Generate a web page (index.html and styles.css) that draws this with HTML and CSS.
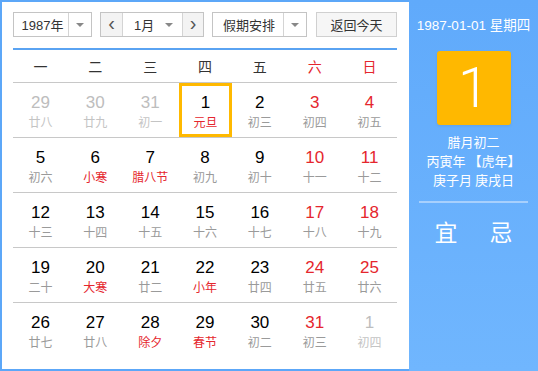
FILE: index.html
```html
<!DOCTYPE html>
<html lang="zh">
<head>
<meta charset="utf-8">
<link rel="stylesheet" href="styles.css">
</head>
<body>
<div class="cal">
  <div class="main">
    <div class="toolbar">
      <div class="sel sel-year"><span class="sel-text">1987年</span><span class="sel-arrow"><i class="tri"></i></span></div>
      <div class="sel sel-month">
        <span class="nav">&lsaquo;</span>
        <span class="sel-text month-text">1月<i class="tri"></i></span>
        <span class="nav nav-r">&rsaquo;</span>
      </div>
      <div class="sel sel-hol"><span class="sel-text">假期安排</span><span class="sel-arrow"><i class="tri"></i></span></div>
      <div class="btn-today">返回今天</div>
    </div>
    <div class="week">
      <span>一</span><span>二</span><span>三</span><span>四</span><span>五</span><span class="red">六</span><span class="red">日</span>
    </div>
    <div class="grid">
      <div class="row">
        <div class="day other"><b>29</b><em>廿八</em></div>
        <div class="day other"><b>30</b><em>廿九</em></div>
        <div class="day other"><b>31</b><em>初一</em></div>
        <div class="day sel-day"><b>1</b><em class="fest">元旦</em></div>
        <div class="day"><b>2</b><em>初三</em></div>
        <div class="day we"><b>3</b><em>初四</em></div>
        <div class="day we"><b>4</b><em>初五</em></div>
      </div>
      <div class="row">
        <div class="day"><b>5</b><em>初六</em></div>
        <div class="day"><b>6</b><em class="fest">小寒</em></div>
        <div class="day"><b>7</b><em class="fest">腊八节</em></div>
        <div class="day"><b>8</b><em>初九</em></div>
        <div class="day"><b>9</b><em>初十</em></div>
        <div class="day we"><b>10</b><em>十一</em></div>
        <div class="day we"><b>11</b><em>十二</em></div>
      </div>
      <div class="row">
        <div class="day"><b>12</b><em>十三</em></div>
        <div class="day"><b>13</b><em>十四</em></div>
        <div class="day"><b>14</b><em>十五</em></div>
        <div class="day"><b>15</b><em>十六</em></div>
        <div class="day"><b>16</b><em>十七</em></div>
        <div class="day we"><b>17</b><em>十八</em></div>
        <div class="day we"><b>18</b><em>十九</em></div>
      </div>
      <div class="row">
        <div class="day"><b>19</b><em>二十</em></div>
        <div class="day"><b>20</b><em class="fest">大寒</em></div>
        <div class="day"><b>21</b><em>廿二</em></div>
        <div class="day"><b>22</b><em class="fest">小年</em></div>
        <div class="day"><b>23</b><em>廿四</em></div>
        <div class="day we"><b>24</b><em>廿五</em></div>
        <div class="day we"><b>25</b><em>廿六</em></div>
      </div>
      <div class="row last">
        <div class="day"><b>26</b><em>廿七</em></div>
        <div class="day"><b>27</b><em>廿八</em></div>
        <div class="day"><b>28</b><em class="fest">除夕</em></div>
        <div class="day"><b>29</b><em class="fest">春节</em></div>
        <div class="day"><b>30</b><em>初二</em></div>
        <div class="day we"><b>31</b><em>初三</em></div>
        <div class="day other"><b>1</b><em>初四</em></div>
      </div>
    </div>
  </div>
  <div class="side">
    <div class="side-date">1987-01-01 星期四</div>
    <div class="big-day">1</div>
    <div class="lunar">
      <div>腊月初二</div>
      <div>丙寅年 【虎年】</div>
      <div>庚子月 庚戌日</div>
    </div>
    <div class="divider"></div>
    <div class="yiji"><span>宜</span><span>忌</span></div>
  </div>
</div>
</body>
</html>
```
FILE: styles.css
```css
html, body {
  margin: 0;
  padding: 0;
  background: #fff;
}
body {
  font-family: "Liberation Sans", "Noto Sans CJK SC", sans-serif;
}
.cal {
  width: 538px;
  height: 371px;
  box-sizing: border-box;
  border: 2px solid #5ca7f8;
  border-right: 0;
  display: flex;
}
.main {
  width: 407px;
  box-sizing: border-box;
  padding: 10px 12px 0 11px;
}
.toolbar {
  display: flex;
  height: 25px;
  font-size: 13px;
  color: #333;
}
.sel {
  box-sizing: border-box;
  height: 25px;
  border: 1px solid #c4c4c4;
  display: flex;
  align-items: stretch;
  background: #fff;
}
.sel-text {
  display: flex;
  align-items: center;
  justify-content: center;
  flex: 1;
}
.sel-arrow {
  width: 22px;
  border-left: 1px solid #d4d4d4;
  display: flex;
  align-items: center;
  justify-content: center;
}
.tri {
  display: inline-block;
  width: 0;
  height: 0;
  border-left: 4px solid transparent;
  border-right: 4px solid transparent;
  border-top: 4px solid #888;
}
.sel-year { width: 79px; margin-right: 8px; }
.sel-year .sel-text { padding-left: 3px; }
.sel-month { width: 104px; margin-right: 8px; }
.nav {
  width: 21px;
  background: #f3f3f3;
  display: flex;
  align-items: center;
  justify-content: center;
  font-size: 20px;
  color: #555;
  line-height: 1;
  padding-bottom: 3px;
  box-sizing: border-box;
}
.nav-r { border-left: 1px solid #d4d4d4; }
.month-text {
  border-left: 1px solid #d4d4d4;
  justify-content: space-between;
  padding: 0 9px 0 11px;
}
.sel-hol { width: 95px; margin-right: 9px; }
.sel-hol .sel-text { padding-left: 2px; }
.btn-today {
  width: 81px;
  height: 25px;
  box-sizing: border-box;
  border: 1px solid #d0d0d0;
  background: #f6f6f6;
  display: flex;
  align-items: center;
  justify-content: center;
}
.week {
  margin-top: 11px;
  border-top: 2px solid #5aa3f2;
  border-bottom: 1px solid #c8c8c8;
  height: 32px;
  display: grid;
  grid-template-columns: repeat(7, 1fr);
  align-items: center;
  font-size: 14px;
  color: #333;
  font-family: "Noto Sans CJK SC", sans-serif;
}
.week span { text-align: center; }
.red { color: #e5262d; }
.row {
  display: grid;
  grid-template-columns: repeat(7, 1fr);
  height: 55px;
  box-sizing: border-box;
  border-bottom: 1px solid #c8c8c8;
}
.row.last { border-bottom: 0; }
.day {
  display: flex;
  flex-direction: column;
  align-items: center;
  box-sizing: border-box;
  padding-top: 9px;
}
.day b {
  font-weight: normal;
  font-size: 17px;
  line-height: 22px;
  color: #000;
}
.day em {
  font-style: normal;
  font-size: 12px;
  line-height: 16px;
  color: #9a9a9a;
  font-family: "Noto Sans CJK SC", sans-serif;
}
.day.we b { color: #e5262d; }
.day em.fest { color: #e5262d; }
.day.other b { color: #bdbdbd; }
.day.other em { color: #c4c4c4; }
.sel-day {
  border: 3px solid #ffb900;
  padding-top: 6px;
  margin-left: 1px;
}
.side {
  flex: 1;
  margin-top: -2px;
  margin-bottom: -2px;
  background: linear-gradient(#60aafb, #70b6fe);
  color: #fff;
  display: flex;
  flex-direction: column;
  align-items: center;
}
.side-date {
  margin-top: 17px;
  font-size: 13.5px;
  line-height: 18px;
}
.big-day {
  margin-top: 16px;
  width: 74px;
  height: 74px;
  background: #ffb800;
  border-radius: 3px;
  box-shadow: 0 1px 3px rgba(0, 0, 0, 0.08);
  display: flex;
  align-items: center;
  justify-content: center;
  font-family: Roboto, "Liberation Sans", sans-serif;
  font-weight: 300;
  font-size: 56px;
  line-height: 1;
}
.lunar {
  margin-top: 7px;
  font-size: 13px;
  line-height: 19px;
  text-align: center;
  font-family: "Noto Sans CJK SC", sans-serif;
}
.divider {
  margin-top: 12px;
  width: 109px;
  height: 2px;
  background: #a7d0fd;
}
.yiji {
  margin-top: 13px;
  display: flex;
  gap: 32px;
  font-size: 23px;
  line-height: 30px;
  font-family: "Noto Sans CJK SC", sans-serif;
}
```
